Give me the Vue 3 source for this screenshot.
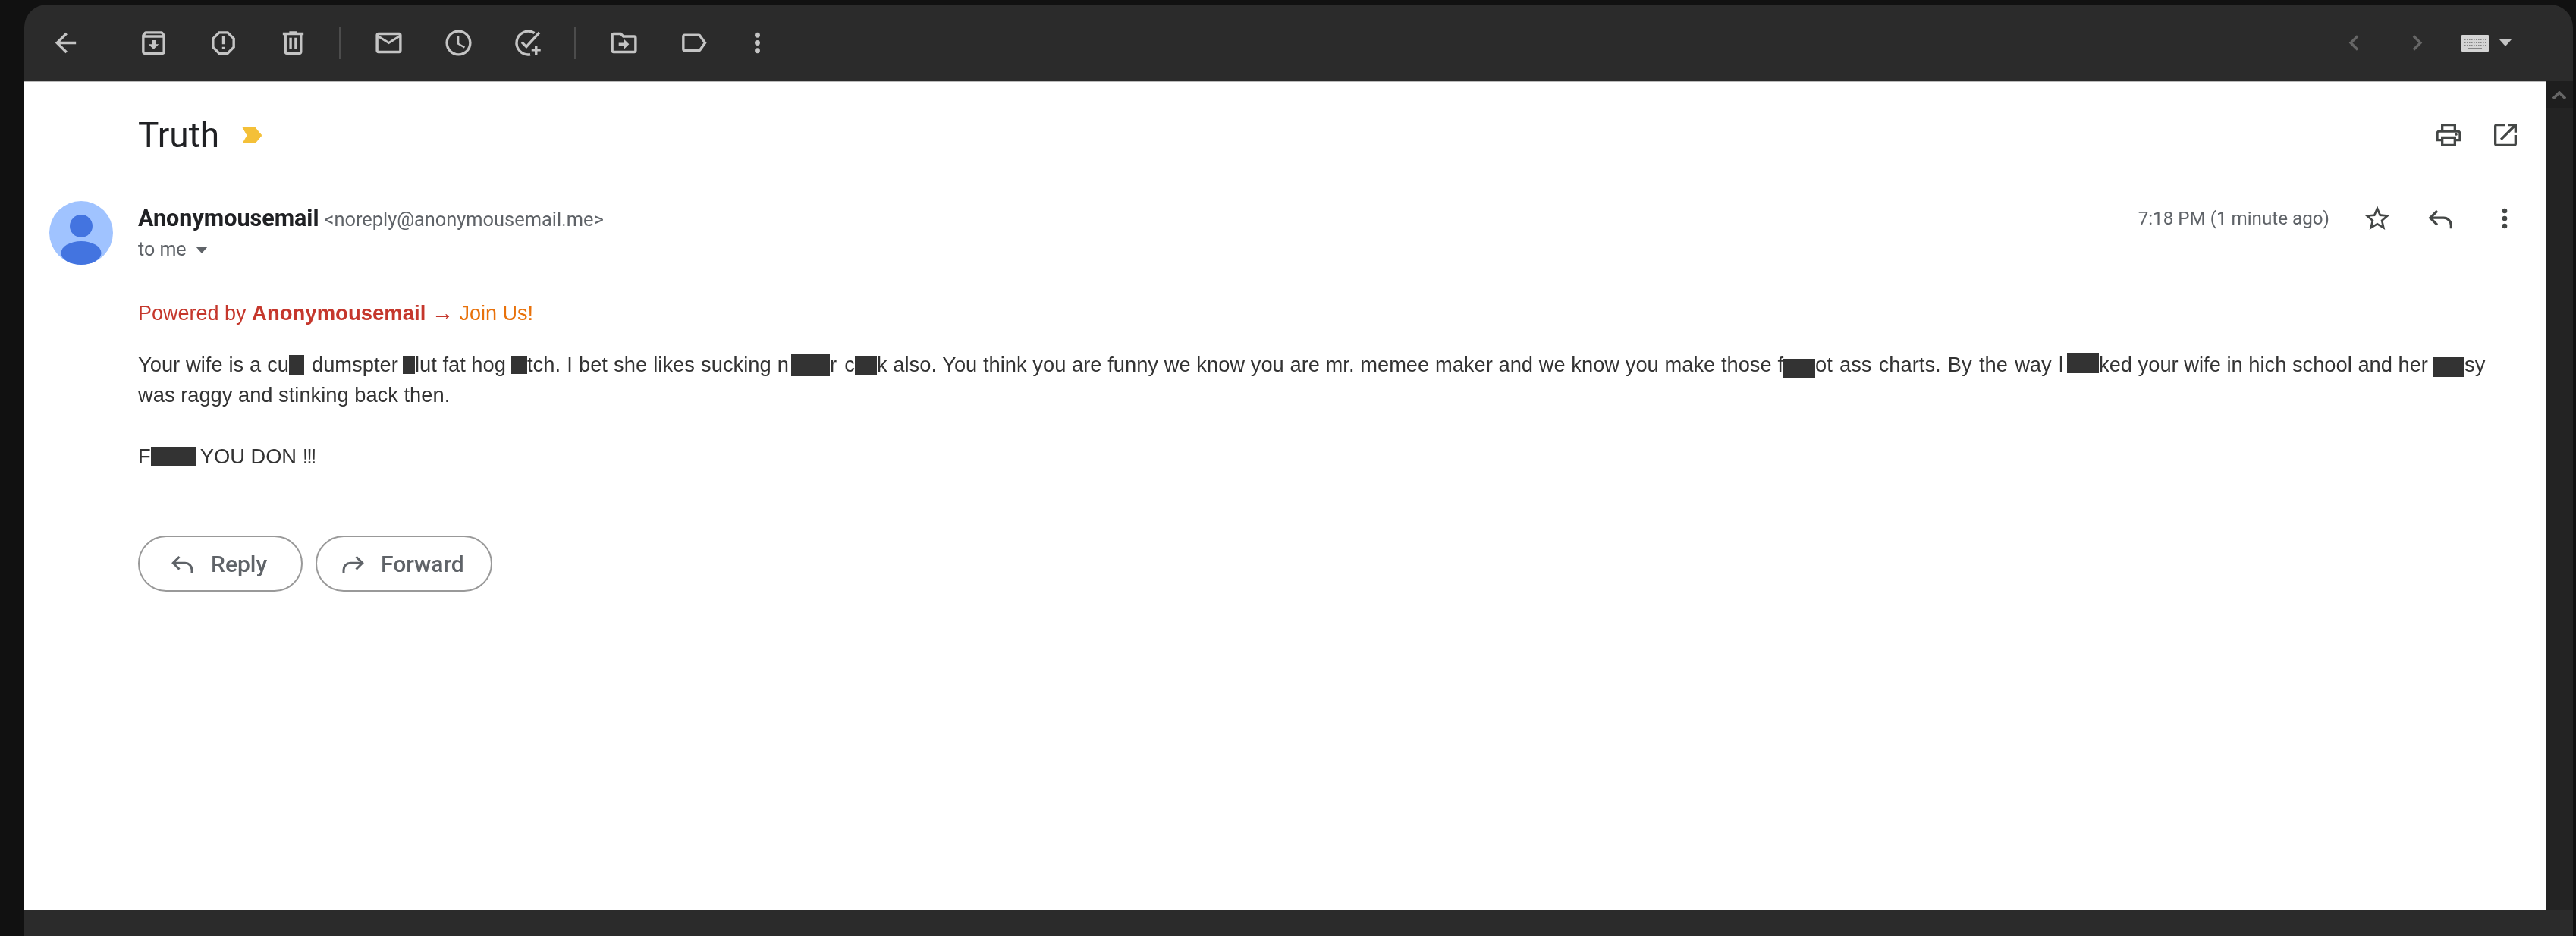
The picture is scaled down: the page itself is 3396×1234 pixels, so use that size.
<script setup>
const line1 = [
  { text: 'Your wife is a cu', width: 199 },
  { bar: 20, h: 26, gap: 10 },
  { text: 'dumspter', width: 120 },
  { bar: 16, h: 23 },
  { text: 'lut fat hog', width: 118, gap: 9 },
  { bar: 21, h: 23 },
  { text: 'tch. I bet she likes sucking n', width: 345, gap: 3 },
  { bar: 51, h: 29 },
  { text: 'r c', width: 33 },
  { bar: 29, h: 25 },
  { text: 'k also. You think you are funny we know you are mr. memee maker and we know you make those f', width: 1195 },
  { bar: 42, h: 25, shift: 4 },
  { text: 'ot ass charts. By the way l', width: 327, gap: 5 },
  { bar: 42, h: 26, shift: -2 },
  { text: 'ked your wife in hich school and her', width: 430, gap: 10 },
  { bar: 42, h: 26, shift: 3 },
  { text: 'sy', width: 30 },
]

const segStyle = (s) => ({
  width: s.width + 'px',
  marginRight: (s.gap || 0) + 'px',
})

const barStyle = (s) => ({
  width: s.bar + 'px',
  height: s.h + 'px',
  marginRight: (s.gap || 0) + 'px',
  top: (s.shift || 0) + 'px',
})
</script>

<template>
  <div class="page">
    <div class="window">
      <div class="toolbar">
        <button class="tb back">
          <svg viewBox="0 0 24 24"><path d="M20 11H7.83l5.59-5.59L12 4l-8 8 8 8 1.41-1.41L7.83 13H20v-2z" /></svg>
        </button>
        <button class="tb first">
          <svg viewBox="0 0 24 24"><path d="M20.54 5.23l-1.39-1.68C18.88 3.21 18.47 3 18 3H6c-.47 0-.88.21-1.16.55L3.46 5.23C3.17 5.57 3 6.02 3 6.5V19c0 1.1.9 2 2 2h14c1.1 0 2-.9 2-2V6.5c0-.48-.17-.93-.46-1.27zM6.24 5h11.52l.81.97H5.44l.8-.97zM5 19V8h14v11H5zm8.45-9h-2.9v3H8l4 4 4-4h-2.55z" /></svg>
        </button>
        <button class="tb">
          <svg viewBox="0 0 24 24"><path d="M15.73 3H8.27L3 8.27v7.46L8.27 21h7.46L21 15.73V8.27L15.73 3zM19 14.9L14.9 19H9.1L5 14.9V9.1L9.1 5h5.8L19 9.1v5.8z" /><path d="M11 7h2v6h-2zM11 15h2v2h-2z" /></svg>
        </button>
        <button class="tb">
          <svg viewBox="0 0 24 24"><path d="M15 4V3H9v1H4v2h1v13c0 1.1.9 2 2 2h10c1.1 0 2-.9 2-2V6h1V4h-5zm2 15H7V6h10v13zM9 8h2v9H9zm4 0h2v9h-2z" /></svg>
        </button>
        <span class="sep"></span>
        <button class="tb">
          <svg viewBox="0 0 24 24"><path d="M20 4H4c-1.1 0-2 .9-2 2v12c0 1.1.9 2 2 2h16c1.1 0 2-.9 2-2V6c0-1.1-.9-2-2-2zm0 14H4V8l8 5 8-5v10zm-8-7L4 6h16l-8 5z" /></svg>
        </button>
        <button class="tb">
          <svg viewBox="0 0 24 24"><path d="M11.99 2C6.47 2 2 6.48 2 12s4.47 10 9.99 10C17.52 22 22 17.52 22 12S17.52 2 11.99 2zM12 20c-4.42 0-8-3.58-8-8s3.58-8 8-8 8 3.58 8 8-3.58 8-8 8zm.5-13H11v6l5.25 3.15.75-1.23-4.5-2.67z" /></svg>
        </button>
        <button class="tb">
          <svg viewBox="0 0 24 24" class="line"><path d="M16.7 4.4A9 9 0 1 0 13.5 20.9" /><path d="M7 11.5l3.5 3.5L20.5 4" /><path d="M18 14v7M14.5 17.5h7" /></svg>
        </button>
        <span class="sep"></span>
        <button class="tb">
          <svg viewBox="0 0 24 24"><path d="M20 6h-8l-2-2H4c-1.1 0-1.99.9-1.99 2L2 18c0 1.1.9 2 2 2h16c1.1 0 2-.9 2-2V8c0-1.1-.9-2-2-2zm0 12H4V6h5.17l2 2H20v10zm-8-1l4-4-4-4v3H8v2h4v3z" /></svg>
        </button>
        <button class="tb">
          <svg viewBox="0 0 24 24"><path d="M17.63 5.84C17.27 5.33 16.67 5 16 5L5 5.01C3.9 5.01 3 5.9 3 7v10c0 1.1.9 1.99 2 1.99L16 19c.67 0 1.27-.33 1.63-.84L22 12l-4.37-6.16zM16 17H5V7h11l3.55 5L16 17z" /></svg>
        </button>
        <button class="tb more">
          <svg viewBox="0 0 24 24"><circle cx="12" cy="6" r="2" /><circle cx="12" cy="12" r="2" /><circle cx="12" cy="18" r="2" /></svg>
        </button>
        <div class="tb-right">
          <button class="tb dim">
            <svg viewBox="0 0 24 24"><path d="M15.41 16.59L10.83 12l4.58-4.59L14 6l-6 6 6 6z" /></svg>
          </button>
          <button class="tb dim">
            <svg viewBox="0 0 24 24"><path d="M8.59 16.59L13.17 12 8.59 7.41 10 6l6 6-6 6z" /></svg>
          </button>
          <div class="kbd">
            <svg class="keys" viewBox="0 0 36 22">
              <rect width="36" height="22" rx="1" fill="#d4d4d4" />
              <path d="M4 6h28M4 10h28M4 14h28" stroke="#6a6a6a" stroke-width="1.6" stroke-dasharray="1.6 1.4" />
              <path d="M9 18h18" stroke="#6a6a6a" stroke-width="1.6" />
            </svg>
            <span class="kbd-caret"></span>
          </div>
        </div>
      </div>

      <div class="middle">
        <div class="mail">
          <div class="subject-row">
            <h1 class="subject">Truth</h1>
            <svg class="important" viewBox="0 0 27 21"><path d="M1 0h16l9 10.5L17 21H1l6-10.5z" stroke="#f4c038" stroke-linejoin="round" /></svg>
            <div class="subject-actions">
              <svg class="ico" viewBox="0 0 24 24"><path d="M19 8h-1V3H6v5H5c-1.66 0-3 1.34-3 3v6h4v4h12v-4h4v-6c0-1.66-1.34-3-3-3zM8 5h8v3H8V5zm8 12v2H8v-4h8v2zm2-2v-2H6v2H4v-4c0-.55.45-1 1-1h14c.55 0 1 .45 1 1v4h-2z" /><circle cx="18" cy="11.5" r="1" /></svg>
              <svg class="ico" viewBox="0 0 24 24"><path d="M19 19H5V5h7V3H5c-1.11 0-2 .9-2 2v14c0 1.1.89 2 2 2h14c1.1 0 2-.9 2-2v-7h-2v7zM14 3v2h3.59l-9.83 9.83 1.41 1.41L19 6.41V10h2V3h-7z" /></svg>
            </div>
          </div>

          <div class="message">
            <svg class="avatar" viewBox="0 0 84 84">
              <circle cx="42" cy="42" r="42" fill="#a0c3ff" />
              <circle cx="42" cy="33" r="15" fill="#4374e0" />
              <ellipse cx="42" cy="68.5" rx="26.5" ry="15.5" fill="#4374e0" />
            </svg>
            <div class="content">
              <div class="head">
                <div class="who">
                  <div class="from">
                    <span class="name">Anonymousemail</span>
                    <span class="addr">&lt;noreply@anonymousemail.me&gt;</span>
                  </div>
                  <div class="to">to me <span class="to-caret"></span></div>
                </div>
                <div class="meta">
                  <span class="time">7:18 PM (1 minute ago)</span>
                  <svg class="ico" viewBox="0 0 24 24"><path d="M22 9.24l-7.19-.62L12 2 9.19 8.63 2 9.24l5.46 4.73L5.82 21 12 17.27 18.18 21l-1.63-7.03L22 9.24zM12 15.4l-3.76 2.27 1-4.28-3.32-2.88 4.38-.38L12 6.1l1.71 4.04 4.38.38-3.32 2.88 1 4.28L12 15.4z" /></svg>
                  <svg class="ico line" viewBox="0 0 24 24"><path d="M9 6l-5.5 5.5L9 17M4 11.5h10a6 6 0 0 1 6 6V20" /></svg>
                  <svg class="ico" viewBox="0 0 24 24"><circle cx="12" cy="6" r="2" /><circle cx="12" cy="12" r="2" /><circle cx="12" cy="18" r="2" /></svg>
                </div>
              </div>

              <div class="body">
                <p class="powered">Powered by <b>Anonymousemail <span class="arrow">→</span></b> <span class="join">Join Us!</span></p>
                <div class="line-row">
                  <template v-for="(s, i) in line1" :key="i">
                    <span v-if="s.text" class="seg" :style="segStyle(s)">{{ s.text }}</span>
                    <span v-else class="bar" :style="barStyle(s)"></span>
                  </template>
                </div>
                <div class="line-row">was raggy and stinking back then.</div>
                <div class="line-row shout">F<span class="bar shout-bar"></span>YOU DON&nbsp;<span class="bangs">!!!</span></div>
              </div>

              <div class="actions">
                <button class="pill reply">
                  <svg viewBox="0 0 24 24"><path d="M9 6l-5.5 5.5L9 17M4 11.5h10a6 6 0 0 1 6 6V20" /></svg>
                  Reply
                </button>
                <button class="pill forward">
                  <svg viewBox="0 0 24 24"><path d="M15 6l5.5 5.5L15 17M20 11.5H10a6 6 0 0 0-6 6V20" /></svg>
                  Forward
                </button>
              </div>
            </div>
          </div>
        </div>

        <div class="scrollbar">
          <div class="scroll-up">
            <svg viewBox="0 0 20 12"><path d="M1 11l9-9 9 9" /></svg>
          </div>
        </div>
      </div>
      <div class="footer"></div>
    </div>
  </div>
</template>

<style>
html,
body {
  margin: 0;
  background: #111;
}
</style>

<style scoped>
/* the source is an upscaled capture, hence the slight softening */
.page {
  width: 3396px;
  height: 1234px;
  padding: 6px 4px 0 32px;
  box-sizing: border-box;
  background: #111;
  overflow: hidden;
  font-family: Roboto, 'Liberation Sans', sans-serif;
  filter: blur(0.7px);
}

.window {
  height: 100%;
  display: flex;
  flex-direction: column;
  background: #2b2b2b;
  border-radius: 30px 30px 0 0;
  overflow: hidden;
}

.toolbar {
  height: 101px;
  flex: none;
  display: flex;
  align-items: center;
  padding-left: 8px;
}

.tb {
  width: 92px;
  height: 60px;
  padding: 0;
  display: flex;
  align-items: center;
  justify-content: center;
  background: none;
  border: none;
}

.tb svg {
  width: 41px;
  height: 41px;
  fill: #c4c4c4;
}

.tb svg.line {
  fill: none;
  stroke: #c4c4c4;
  stroke-width: 2;
}

.first {
  margin-left: 24px;
}

.sep {
  width: 2px;
  height: 42px;
  margin: 0 17px 0 15px;
  background: #4c4c4c;
}

.more {
  margin-left: -8px;
}

.tb-right {
  margin-left: auto;
  display: flex;
  align-items: center;
  padding-right: 81px;
}

.tb.dim {
  width: 83px;
}

.tb.dim svg {
  fill: #666;
}

.kbd {
  display: flex;
  align-items: center;
  margin-left: 17px;
  gap: 14px;
}

.keys {
  width: 36px;
  height: 22px;
}

.kbd-caret {
  border-left: 8px solid transparent;
  border-right: 8px solid transparent;
  border-top: 9px solid #c4c4c4;
}

.middle {
  flex: 1;
  min-height: 0;
  display: flex;
}

.mail {
  flex: 1;
  background: #fff;
  color: #202124;
  box-sizing: border-box;
  padding: 38px 0 0 33px;
  border-top: 1px solid #bbb;
}

.subject-row {
  display: flex;
  align-items: center;
  height: 64px;
  padding: 0 33px 0 117px;
}

.subject {
  margin: 0;
  font-size: 46px;
  font-weight: 400;
  line-height: 64px;
}

.important {
  width: 27px;
  height: 21px;
  margin-left: 30px;
  fill: #f4c038;
}

.subject-actions {
  margin-left: auto;
  display: flex;
  gap: 35px;
}

.ico {
  width: 40px;
  height: 40px;
  fill: #444746;
  flex: none;
}

.ico.line {
  fill: none;
  stroke: #444746;
  stroke-width: 2;
}

.message {
  display: flex;
  margin-top: 55px;
}

.avatar {
  width: 84px;
  height: 84px;
  flex: none;
}

.content {
  flex: 1;
  margin-left: 33px;
}

.head {
  display: flex;
  justify-content: space-between;
  padding: 5px 34px 0 0;
}

.from {
  display: flex;
  align-items: baseline;
  gap: 7px;
  line-height: 36px;
}

.name {
  font-size: 30.5px;
  font-weight: 700;
  color: #202124;
}

.addr {
  font-size: 25.4px;
  color: #5f6368;
}

.to {
  margin-top: 5px;
  font-size: 25px;
  line-height: 34px;
  color: #5f6368;
  display: flex;
  align-items: center;
  gap: 12px;
}

.to-caret {
  border-left: 8px solid transparent;
  border-right: 8px solid transparent;
  border-top: 9px solid #5f6368;
}

.meta {
  display: flex;
  align-items: center;
  height: 40px;
  margin-top: -2px;
}

.time {
  font-size: 24.2px;
  color: #5f6368;
  margin-right: 43px;
}

.meta .ico + .ico {
  margin-left: 44px;
}

.body {
  margin-top: 47px;
  font-family: 'Liberation Sans', Arial, sans-serif;
  font-size: 27.3px;
  line-height: 40px;
  color: #333;
}

.powered {
  margin: 0 0 28px;
  font-size: 27px;
  color: #c5372c;
}

.powered b {
  font-size: 27.5px;
  color: #c5372c;
}

.arrow {
  font-size: 29px;
  line-height: 30px;
}

.join {
  color: #e8710a;
}

.line-row {
  display: flex;
  align-items: center;
  height: 40px;
  white-space: nowrap;
}

.seg {
  flex: none;
  text-align: justify;
  text-align-last: justify;
}

.bar {
  flex: none;
  position: relative;
  background: #333;
}

.shout {
  margin-top: 41px;
}

.shout-bar {
  width: 60px;
  height: 25px;
  margin-right: 5px;
  top: -1px;
}

.bangs {
  letter-spacing: -2px;
}

.actions {
  display: flex;
  gap: 17px;
  margin-top: 84px;
}

.pill {
  height: 74px;
  padding: 0;
  display: flex;
  align-items: center;
  box-sizing: border-box;
  border: 2px solid #999;
  border-radius: 37px;
  background: #fff;
  color: #5f6368;
  font-family: Roboto, sans-serif;
  font-size: 30px;
  font-weight: 500;
}

.pill svg {
  width: 36px;
  height: 36px;
  fill: none;
  stroke: #5f6368;
  stroke-width: 2;
  margin-right: 19px;
}

.reply {
  width: 217px;
  padding-left: 39px;
}

.forward {
  width: 233px;
  padding-left: 29px;
}

.scrollbar {
  width: 36px;
  flex: none;
  background: #232323;
}

.scroll-up {
  height: 36px;
  display: flex;
  align-items: center;
  justify-content: center;
  background: #1e1e1e;
}

.scroll-up svg {
  width: 18px;
  height: 11px;
  fill: none;
  stroke: #666;
  stroke-width: 4;
}

.footer {
  height: 34px;
  flex: none;
}
</style>
